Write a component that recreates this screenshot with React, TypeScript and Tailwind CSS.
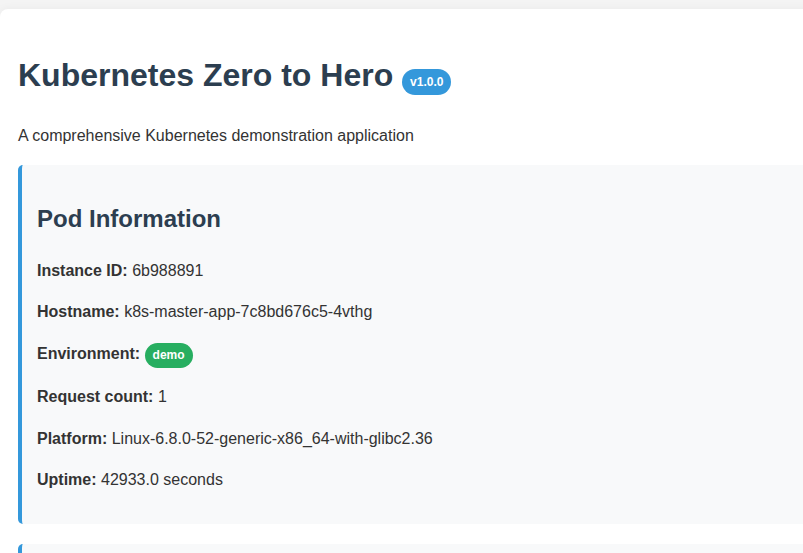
import React from 'react'

const rows: { label: string; value: React.ReactNode }[] = [
  { label: 'Instance ID:', value: '6b988891' },
  { label: 'Hostname:', value: 'k8s-master-app-7c8bd676c5-4vthg' },
  {
    label: 'Environment:',
    value: (
      <span className="inline-block h-[25px] rounded-full bg-[#27ae60] px-2 text-xs leading-[25px] font-bold text-white">
        demo
      </span>
    ),
  },
  { label: 'Request count:', value: '1' },
  { label: 'Platform:', value: 'Linux-6.8.0-52-generic-x86_64-with-glibc2.36' },
  { label: 'Uptime:', value: '42933.0 seconds' },
]

const App: React.FC = () => {
  return (
    <div
      className="h-[553px] overflow-hidden bg-[#f4f4f4] pt-[9px] text-[#333]"
      style={{ fontFamily: '"Liberation Sans", Arial, sans-serif' }}
    >
      <div className="w-[1160px] rounded-tl-lg bg-white pt-5 pl-[18px] pr-5 shadow-[0_0_10px_rgba(0,0,0,0.05)]">
        {/* Header */}
        <h1 className="my-[21.44px] text-[32px] leading-[1.6] font-bold text-[#2c3e50]">
          Kubernetes Zero to Hero{' '}
          <span className="inline-block h-[26px] rounded-full bg-[#3498db] px-2 text-xs leading-[26px] font-bold text-white">
            v1.0.0
          </span>
        </h1>
        <p className="mb-4 text-[16px] leading-[1.6]">A comprehensive Kubernetes demonstration application</p>

        {/* Pod info card */}
        <div className="mb-5 rounded-[5px] border-l-4 border-[#3498db] bg-[#f8f9fa] p-[15px]">
          <h2 className="my-[19.92px] text-[24px] leading-[1.6] font-bold text-[#2c3e50]">Pod Information</h2>
          {rows.map((r) => (
            <p key={r.label} className="my-4 text-[16px] leading-[1.6]">
              <strong className="font-bold">{r.label}</strong> {r.value}
            </p>
          ))}
        </div>

        {/* Next card, cut off by the window */}
        <div className="mb-5 h-[200px] rounded-[5px] border-l-4 border-[#3498db] bg-[#f8f9fa] p-[15px]" />
      </div>
    </div>
  )
}

export default App
